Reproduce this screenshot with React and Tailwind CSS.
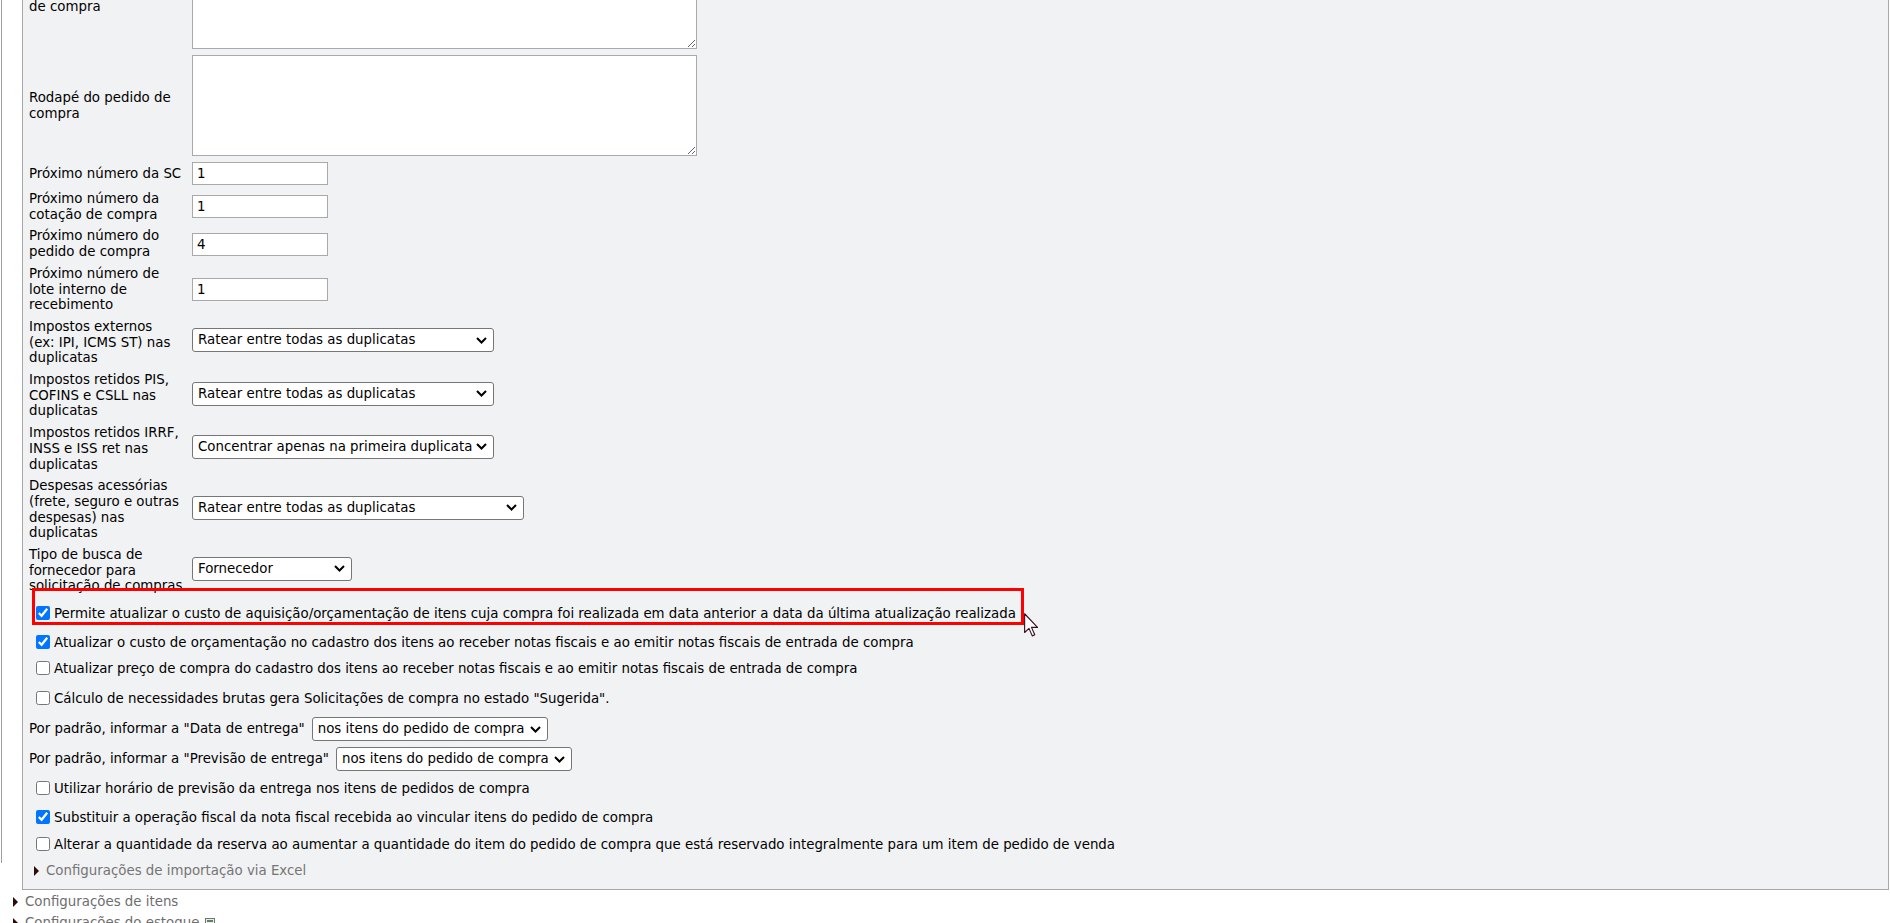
import React from "react";

function Chevron() {
  return (
    <svg width="11" height="7" viewBox="0 0 11 7" className="shrink-0">
      <path d="M1 1 L5.5 5.5 L10 1" fill="none" stroke="#000" strokeWidth="2" />
    </svg>
  );
}

function Select({ value, w }) {
  return (
    <div
      className={
        w +
        " h-[24px] border border-[#767676] rounded-[3px] bg-white flex items-center justify-between pl-[5px] pr-[6px] whitespace-nowrap"
      }
    >
      <span>{value}</span>
      <Chevron />
    </div>
  );
}

function TextInput({ value }) {
  return (
    <input
      readOnly
      defaultValue={value}
      className="block w-[136px] h-[23px] border border-[#a9a9a9] bg-white px-[4px] outline-none"
    />
  );
}

function FormRow({ label, children }) {
  return (
    <div className="flex items-center py-[3px]">
      <div className="w-[157px] shrink-0 leading-[15.7px]">{label}</div>
      <div className="ml-[6px]">{children}</div>
    </div>
  );
}

function SelectRow({ label, children }) {
  return (
    <div className="flex items-center py-[3px]">
      <div className="w-[157px] shrink-0 leading-[15.7px]">{label}</div>
      <div className="ml-[6px] mb-[4px]">{children}</div>
    </div>
  );
}

function Check({ checked, label, className }) {
  return (
    <div className={"flex items-center h-[20px] " + className}>
      <input
        type="checkbox"
        readOnly
        defaultChecked={checked}
        className="ml-[7px] mr-[4px] mb-[3px] w-[14px] h-[14px] shrink-0 accent-[#0075ff]"
      />
      <span className="whitespace-nowrap">{label}</span>
    </div>
  );
}

function Arrow() {
  return (
    <span className="inline-block w-0 h-0 border-y-[5px] border-y-transparent border-l-[5px] border-l-[#2e0a0a]" />
  );
}

export default function App() {
  return (
    <div className="relative w-[1890px] h-[923px] overflow-hidden bg-white text-[13.35px] text-black font-['DejaVu_Sans',Verdana,sans-serif]">
      <div className="ml-[1px] h-full border-l border-[#9d9d9d]">
        <div className="-mt-[60px] ml-[20px] mr-[1px] border border-[#a8a8a8] bg-[#f1f2f3] pt-[4px] pl-[6px] pb-[8px]">
          <FormRow label="Cabeçalho do pedido de compra">
            <textarea className="block w-[505px] h-[101px] border border-[#a9a9a9] bg-white resize" />
          </FormRow>
          <FormRow label="Rodapé do pedido de compra">
            <textarea className="block w-[505px] h-[101px] border border-[#a9a9a9] bg-white resize" />
          </FormRow>
          <FormRow label="Próximo número da SC">
            <TextInput value="1" />
          </FormRow>
          <FormRow label="Próximo número da cotação de compra">
            <TextInput value="1" />
          </FormRow>
          <FormRow label="Próximo número do pedido de compra">
            <TextInput value="4" />
          </FormRow>
          <FormRow label="Próximo número de lote interno de recebimento">
            <TextInput value="1" />
          </FormRow>
          <SelectRow
            label={
              <>
                Impostos externos
                <br />
                (ex: IPI, ICMS ST) nas duplicatas
              </>
            }
          >
            <Select w="w-[302px]" value="Ratear entre todas as duplicatas" />
          </SelectRow>
          <SelectRow label="Impostos retidos PIS, COFINS e CSLL nas duplicatas">
            <Select w="w-[302px]" value="Ratear entre todas as duplicatas" />
          </SelectRow>
          <SelectRow label="Impostos retidos IRRF, INSS e ISS ret nas duplicatas">
            <Select w="w-[302px]" value="Concentrar apenas na primeira duplicata" />
          </SelectRow>
          <SelectRow label="Despesas acessórias (frete, seguro e outras despesas) nas duplicatas">
            <Select w="w-[332px]" value="Ratear entre todas as duplicatas" />
          </SelectRow>
          <SelectRow label="Tipo de busca de fornecedor para solicitação de compras">
            <Select w="w-[160px]" value="Fornecedor" />
          </SelectRow>

          <Check
            className="mt-[7px]"
            checked
            label="Permite atualizar o custo de aquisição/orçamentação de itens cuja compra foi realizada em data anterior a data da última atualização realizada"
          />
          <Check
            className="mt-[9px]"
            checked
            label="Atualizar o custo de orçamentação no cadastro dos itens ao receber notas fiscais e ao emitir notas fiscais de entrada de compra"
          />
          <Check
            className="mt-[6px]"
            label="Atualizar preço de compra do cadastro dos itens ao receber notas fiscais e ao emitir notas fiscais de entrada de compra"
          />
          <Check
            className="mt-[10px]"
            label={'Cálculo de necessidades brutas gera Solicitações de compra no estado "Sugerida".'}
          />
          <div className="mt-[10px] h-[20px] flex items-center gap-[7px] whitespace-nowrap">
            <span>Por padrão, informar a "Data de entrega"</span>
            <Select w="w-[236px]" value="nos itens do pedido de compra" />
          </div>
          <div className="mt-[10px] h-[20px] flex items-center gap-[7px] whitespace-nowrap">
            <span>Por padrão, informar a "Previsão de entrega"</span>
            <Select w="w-[236px]" value="nos itens do pedido de compra" />
          </div>
          <Check
            className="mt-[10px]"
            label="Utilizar horário de previsão da entrega nos itens de pedidos de compra"
          />
          <Check
            className="mt-[9px]"
            checked
            label="Substituir a operação fiscal da nota fiscal recebida ao vincular itens do pedido de compra"
          />
          <Check
            className="mt-[7px]"
            label="Alterar a quantidade da reserva ao aumentar a quantidade do item do pedido de compra que está reservado integralmente para um item de pedido de venda"
          />
          <div className="mt-[6px] h-[20px] flex items-center pl-[5px] gap-[7px] text-[#757575]">
            <Arrow />
            <span>Configurações de importação via Excel</span>
          </div>
        </div>

        <div className="mt-[2px] h-[20px] flex items-center pl-[11px] gap-[7px] text-[#6e6e6e]">
          <Arrow />
          <span>Configurações de itens</span>
        </div>
        <div className="mt-[1px] h-[20px] flex items-center pl-[11px] gap-[7px] text-[#6e6e6e]">
          <Arrow />
          <span>Configurações do estoque</span>
          <svg width="10" height="10" viewBox="0 0 10 10" className="-ml-[1px]">
            <rect x="0.5" y="0.5" width="9" height="9" fill="#e8efe8" stroke="#6b7a6b" />
            <rect x="2" y="2" width="6" height="2" fill="#6b7a6b" />
            <rect x="2" y="6" width="6" height="1" fill="#6b7a6b" />
          </svg>
        </div>
      </div>

      <div className="absolute left-[32px] top-[588px] w-[992px] h-[37px] border-[3px] border-[#ff0000] pointer-events-none" />
      <svg
        className="absolute left-[1024px] top-[613px] pointer-events-none"
        width="15"
        height="24"
        viewBox="0 0 12 19"
      >
        <path
          d="M0.5 0.5 L0.5 15.5 L4 12.2 L6.6 18.2 L8.6 17.3 L6 11.4 L10.8 11.4 Z"
          fill="#fff"
          stroke="#3a0d22"
          strokeWidth="0.9"
          strokeLinejoin="round"
        />
      </svg>
    </div>
  );
}
